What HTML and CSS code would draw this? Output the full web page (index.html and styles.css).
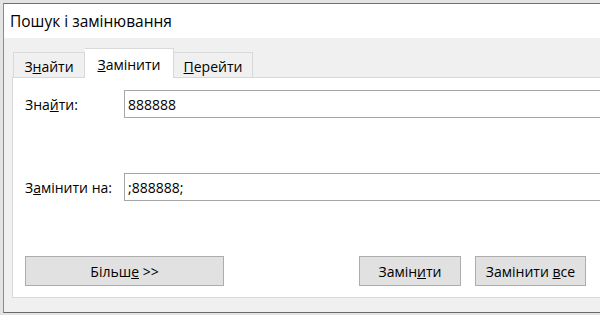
FILE: index.html
```html
<!DOCTYPE html>
<html lang="uk">
<head>
    <meta charset="UTF-8">
    <meta name="viewport" content="width=device-width, initial-scale=1.0">
    <title>Пошук і замінювання</title>
    <link rel="stylesheet" href="styles.css">
</head>
<body>
    <div class="window">
        <div class="title-bar">Пошук і замінювання</div>
        <div class="window-body">
            <div class="tabs">
                <div class="tab find-tab">З<u>н</u>айти</div>
                <div class="tab replace-tab active"><u>З</u>амінити</div>
                <div class="tab goto-tab"><u>П</u>ерейти</div>
            </div>
            <div class="tab-panel">
                <div class="field-row">
                    <label class="field-label" for="find">Зна<u>й</u>ти:</label>
                    <div class="field-input" id="find">888888</div>
                </div>
                <div class="field-row">
                    <label class="field-label" for="replace">З<u>а</u>мінити на:</label>
                    <div class="field-input" id="replace">;888888;</div>
                </div>
                <div class="actions">
                    <button class="btn more-btn">Більш<u>е</u> &gt;&gt;</button>
                    <button class="btn replace-btn">Замін<u>и</u>ти</button>
                    <button class="btn replace-all-btn">Замінити <u>в</u>се</button>
                </div>
            </div>
        </div>
    </div>
</body>
</html>
```

FILE: styles.css
```css
body {
    margin: 0;
    padding: 3px 0 0 3px;
    background-color: #e4e4e4;
    font-family: 'Open Sans', 'Noto Sans', sans-serif;
    font-size: 14px;
    color: #000;
    overflow: hidden;
    height: 315px;
    box-sizing: border-box;
}
.window {
    width: 640px;
    height: 308px;
    border-top: 1px solid #707070;
    border-left: 1px solid #8a8a8a;
    border-bottom: 1px solid #6a6a6a;
    background-color: #f0f0f0;
    display: flex;
    flex-direction: column;
}
.title-bar {
    height: 34px;
    background-color: #fff;
    padding-left: 6px;
    display: flex;
    align-items: center;
    font-size: 15.5px;
}
.window-body {
    flex: 1;
    padding: 10px 0 0 8px;
    display: flex;
    flex-direction: column;
}
.tabs {
    display: flex;
    align-items: flex-end;
    height: 29px;
    padding-left: 1px;
}
.tab {
    height: 25px;
    box-sizing: border-box;
    padding-top: 2px;
    border: 1px solid #d9d9d9;
    border-bottom: none;
    background-color: #f0f0f0;
    display: flex;
    align-items: center;
    justify-content: center;
}
.tab + .tab {
    border-left: none;
}
.find-tab {
    width: 72px;
}
.replace-tab {
    width: 89px;
}
.goto-tab {
    width: 79px;
}
.tab.active {
    height: 30px;
    background-color: #fff;
    margin-bottom: -1px;
    position: relative;
}
.tab-panel {
    height: 221px;
    box-sizing: border-box;
    border: 1px solid #d9d9d9;
    background-color: #fff;
    padding: 12px 0 0 12px;
    display: flex;
    flex-direction: column;
}
.field-row {
    display: flex;
    align-items: center;
    height: 28px;
    margin-bottom: 55px;
}
.field-label {
    width: 99px;
}
.field-input {
    flex: 1;
    height: 28px;
    box-sizing: border-box;
    border: 1px solid #a6a6a6;
    padding: 0 3px;
    display: flex;
    align-items: center;
}
.actions {
    width: 561px;
    display: flex;
    gap: 14px;
}
.btn {
    height: 30px;
    font-family: inherit;
    font-size: 14px;
    color: #000;
    background-color: #e1e1e1;
    border: 1px solid #adadad;
    padding: 0;
}
.more-btn {
    width: 199px;
    margin-right: auto;
}
.replace-btn {
    width: 102px;
}
.replace-all-btn {
    width: 111px;
}
```
